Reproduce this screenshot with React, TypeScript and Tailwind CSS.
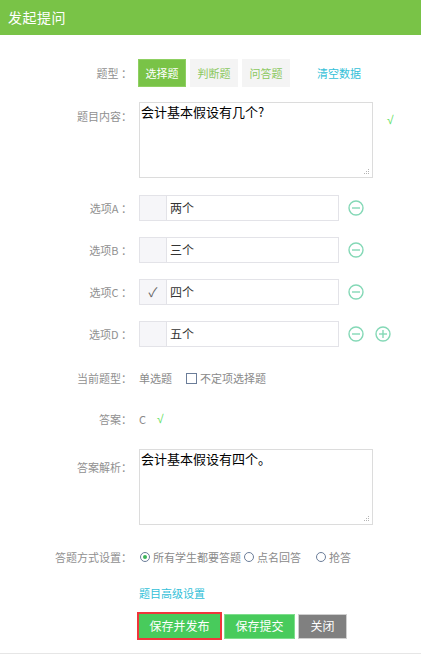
import React from "react"

const font = "font-['Noto_Sans_CJK_SC','Noto_Sans',sans-serif]"

function Label({ children }: { children: React.ReactNode }) {
  return (
    <div className="w-[132px] shrink-0 text-right text-[11px] text-[#909090]">{children}</div>
  )
}

function CircleIcon({ plus }: { plus?: boolean }) {
  return (
    <svg width="16" height="16" viewBox="0 0 16 16" fill="none" stroke="#84d8b6" strokeWidth="1.4">
      <circle cx="8" cy="8" r="7" />
      <line x1="4" y1="8" x2="12" y2="8" />
      {plus && <line x1="8" y1="4" x2="8" y2="12" />}
    </svg>
  )
}

function Resize() {
  return (
    <svg className="absolute right-[2px] bottom-[2px]" width="6" height="6" viewBox="0 0 6 6" fill="#b5b5b5">
      <rect x="4" y="0" width="1" height="1" />
      <rect x="2" y="2" width="1" height="1" />
      <rect x="4" y="2" width="1" height="1" />
      <rect x="0" y="4" width="1" height="1" />
      <rect x="2" y="4" width="1" height="1" />
      <rect x="4" y="4" width="1" height="1" />
    </svg>
  )
}

function TextBox({ text }: { text: string }) {
  return (
    <div className="relative h-[76px] w-[234px] border border-[#dcdcdc] px-[1px] text-[13px] leading-[17px] text-black">
      {text}
      <Resize />
    </div>
  )
}

function Tick() {
  return <span className="font-['Liberation_Sans',sans-serif] text-[12px] text-[#5ee05e]">√</span>
}

function OptionRow({ label, value, checked, last }: { label: string; value: string; checked?: boolean; last?: boolean }) {
  return (
    <div className="flex h-[26px] items-center">
      <Label>{label}</Label>
      <div className="ml-[7px] flex h-[26px] w-[200px] border border-[#e3e3e8]">
        <div className="flex w-[27px] items-center justify-center border-r border-[#e3e3e8] bg-[#f6f6f9] text-[13px] text-[#666]">
          {checked ? "✓" : ""}
        </div>
        <div className="flex items-center pl-[3px] text-[12px] text-[#333]">{value}</div>
      </div>
      <div className="ml-[9px] flex gap-[11px]">
        <CircleIcon />
        {last && <CircleIcon plus />}
      </div>
    </div>
  )
}

function Radio({ on }: { on?: boolean }) {
  return (
    <span className="flex h-[10px] w-[10px] items-center justify-center rounded-full border border-[#6b7d99] bg-white">
      {on && <span className="h-[4px] w-[4px] rounded-full bg-[#3cb45a]" />}
    </span>
  )
}

export default function App() {
  return (
    <div className={`h-[654px] w-[421px] overflow-hidden border-b border-[#e6e6e6] bg-white ${font}`}>
      <div className="flex h-[35px] items-center bg-[#79c347] pl-[8px] text-[14px] tracking-[0.5px] text-white">发起提问</div>

      <div className="mt-[24px] flex h-[28px] items-center">
        <Label>题型 ：</Label>
        <div className="ml-[6px] flex gap-[4px] text-[11px]">
          <div className="flex h-[28px] w-[48px] items-center justify-center border border-[#8fd062] bg-[#79c347] text-white">选择题</div>
          <div className="flex h-[28px] w-[48px] items-center justify-center bg-[#f4f4f4] text-[#8bc860]">判断题</div>
          <div className="flex h-[28px] w-[48px] items-center justify-center bg-[#f4f4f4] text-[#8bc860]">问答题</div>
        </div>
        <div className="ml-[27px] text-[11px] text-[#33bfd8]">清空数据</div>
      </div>

      <div className="mt-[15px] flex">
        <div className="pt-[6px]"><Label>题目内容：</Label></div>
        <div className="ml-[7px]"><TextBox text="会计基本假设有几个?" /></div>
        <div className="ml-[14px] pt-[3px]"><Tick /></div>
      </div>

      <div className="mt-[17px] flex flex-col gap-[16px]">
        <OptionRow label="选项A ：" value="两个" />
        <OptionRow label="选项B ：" value="三个" />
        <OptionRow label="选项C ：" value="四个" checked />
        <OptionRow label="选项D ：" value="五个" last />
      </div>

      <div className="mt-[21px] flex h-[20px] items-center text-[11px]">
        <Label>当前题型：</Label>
        <div className="ml-[7px] text-[#8a8a8a]">单选题</div>
        <span className="ml-[14px] h-[11px] w-[11px] border border-[#6b7d99] bg-white" />
        <div className="ml-[3px] text-[#8a8a8a]">不定项选择题</div>
      </div>

      <div className="mt-[21px] flex h-[20px] items-center text-[11px]">
        <Label>答案：</Label>
        <div className="ml-[7px] text-[#8a8a8a]">C</div>
        <div className="ml-[11px]"><Tick /></div>
      </div>

      <div className="mt-[20px] flex">
        <div className="pt-[10px]"><Label>答案解析：</Label></div>
        <div className="ml-[7px]"><TextBox text="会计基本假设有四个。" /></div>
      </div>

      <div className="mt-[22px] flex h-[20px] items-center text-[11px] text-[#8a8a8a]">
        <Label>答题方式设置：</Label>
        <div className="ml-[8px] flex items-center">
          <Radio on />
          <span className="ml-[3px]">所有学生都要答题</span>
          <span className="ml-[3px]"><Radio /></span>
          <span className="ml-[3px]">点名回答</span>
          <span className="ml-[15px]"><Radio /></span>
          <span className="ml-[3px]">抢答</span>
        </div>
      </div>

      <div className="mt-[16px] flex h-[20px] items-center">
        <div className="ml-[139px] text-[11px] text-[#33bfd8]">题目高级设置</div>
      </div>

      <div className="mt-[9px] ml-[137px] flex items-center gap-[2px] text-[12px] text-white">
        <div className="border-2 border-[#f0353b] p-0">
          <div className="flex h-[24px] w-[81px] items-center justify-center bg-[#48cb5c]">保存并发布</div>
        </div>
        <div className="flex h-[25px] w-[71px] items-center justify-center border border-[#7ede8c] bg-[#48cb5c]">保存提交</div>
        <div className="ml-[1px] flex h-[25px] w-[49px] items-center justify-center border border-[#cfcfcf] bg-[#808080]">关闭</div>
      </div>
    </div>
  )
}
